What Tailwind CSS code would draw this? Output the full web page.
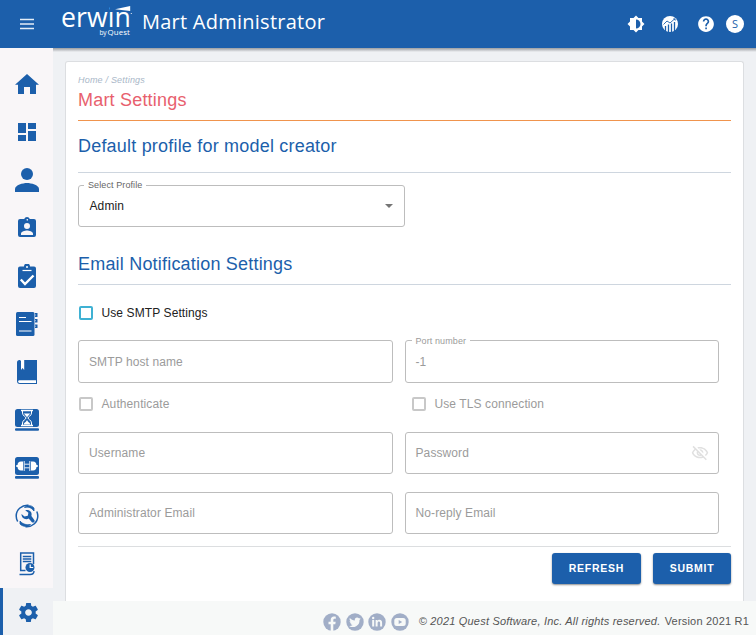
<!DOCTYPE html>
<html lang="en">
<head>
<meta charset="utf-8">
<title>Mart Administrator</title>
<script src="https://cdn.jsdelivr.net/npm/@tailwindcss/browser@4"></script>
</head>
<body class="w-[756px] h-[635px] overflow-hidden flex flex-col bg-[#eff1f4] font-['Liberation_Sans',Arial,sans-serif] text-xs tracking-[0.1px]">
<header class="relative z-10 h-12 shrink-0 flex items-center bg-[#1c5fab] text-white">
  <svg class="ml-[20px] w-[14px] h-[12px]" viewBox="0 0 14 12" fill="none" stroke="#e4edf7" stroke-width="1.7"><path d="M0 1.500h14M0 6h14M0 10.500h14"/></svg>
  <svg class="ml-[26px] w-[76px] h-12 overflow-visible" viewBox="60 0 76 48" fill="#fff">
    <text x="61" y="27" font-family="Open Sans, sans-serif" font-size="27" font-weight="400" textLength="70" lengthAdjust="spacingAndGlyphs">erwin</text>
    <path d="M110 5h22v6.200h-22z" fill="#1c5fab"/>
    <path d="M115 9.300L130.200 6v5z"/>
    <circle cx="131.300" cy="13.500" r=".6"/>
    <text x="99.500" y="34.500" font-family="Open Sans, sans-serif" font-size="6.500" textLength="7">by</text>
    <text x="107.500" y="34.500" font-family="Open Sans, sans-serif" font-size="7.500" textLength="22.500" lengthAdjust="spacingAndGlyphs">Quest</text>
  </svg>
  <h1 class="ml-[6px] -mt-[4px] font-['Open_Sans',sans-serif] text-[20px] leading-6 tracking-[0.25px] whitespace-nowrap">Mart Administrator</h1>
  <div class="ml-auto mr-[12px] flex items-center">
    <svg class="w-[18px] h-[18px] mr-[16px]" viewBox="0 0 24 24" fill="#fff"><path d="M20 15.310L23.310 12 20 8.690V4h-4.690L12 .690 8.690 4H4v4.690L.690 12 4 15.310V20h4.690L12 23.310 15.310 20H20v-4.690zM12 18V6c3.310 0 6 2.690 6 6s-2.690 6-6 6z"/></svg>
    <svg class="w-[18px] h-[18px] mr-[18px]" viewBox="0 0 18 18"><circle cx="9" cy="9" r="8" fill="#fff"/><path d="M2.500 9.500l3.500-3.500 3 2 4.500-4" stroke="#1c5fab" stroke-width=".9" fill="none"/><path d="M4.500 18v-7M7.500 18v-8.500M10.500 18V8.500M13.500 18V7" stroke="#1c5fab" stroke-width="1.300"/><path d="M12 3.500h2.500V6z" fill="#1c5fab"/></svg>
    <svg class="w-[18px] h-[18px] mr-[11px]" viewBox="0 0 24 24" fill="#fff"><path d="M12 1.500C6.200 1.500 1.500 6.200 1.500 12S6.200 22.500 12 22.500 22.500 17.800 22.500 12 17.800 1.500 12 1.500zm1.200 17.500h-2.200v-2.200h2.200V19zm2.200-8.100-1 1c-.8.800-1.200 1.500-1.200 3.100h-2.200v-.6c0-1.200.5-2.200 1.200-3l1.300-1.300c.4-.4.600-.9.600-1.500 0-1.200-.9-2.100-2.100-2.100s-2.100.9-2.100 2.100H7.700C7.700 6.300 9.600 4.400 12 4.400s4.300 1.900 4.300 4.200c0 .9-.4 1.700-.9 2.300z"/></svg>
    <span class="size-[18px] rounded-full bg-white text-[#1c5fab] text-[11px] leading-[18px] text-center font-['Open_Sans',sans-serif]">S</span>
  </div>
</header>
<div class="flex flex-1 min-h-0">
  <nav class="relative z-20 w-[53px] shrink-0 bg-[#f9f6f8] pt-3 flex flex-col text-[#1c5fab]">
    <a class="h-12 shrink-0 flex items-center justify-center"><svg class="w-6 h-5" viewBox="0 0 24 20" fill="currentColor"><path d="M3 20V10.800H0L12 0l12 10.800h-3V20h-6v-7H9v7z"/></svg></a>
    <a class="h-12 shrink-0 flex items-center justify-center"><svg class="size-[18px]" viewBox="0 0 18 18" fill="currentColor"><path d="M0 0h8v10H0zM10 0h8v6h-8zM0 12h8v6H0zM10 8h8v10h-8z"/></svg></a>
    <a class="h-12 shrink-0 flex items-center justify-center"><svg class="size-6" viewBox="0 0 24 24" fill="currentColor"><circle cx="12" cy="6" r="6"/><path d="M0 24v-3c0-4 8-6 12-6s12 2 12 6v3z"/></svg></a>
    <a class="h-12 shrink-0 flex items-center justify-center -mt-px mb-px"><svg class="w-[18px] h-5" viewBox="0 0 18 20" fill="currentColor"><path fill-rule="evenodd" d="M16 2h-4.200a3 3 0 0 0-5.600 0H2a2 2 0 0 0-2 2v14a2 2 0 0 0 2 2h14a2 2 0 0 0 2-2V4a2 2 0 0 0-2-2zM9 2a.8.8 0 1 1 0 1.500A.8.800 0 0 1 9 2zm0 4a3 3 0 1 1 0 6 3 3 0 0 1 0-6zm6 12H3v-1.400c0-2 4-3.100 6-3.100s6 1.100 6 3.100z"/></svg></a>
    <a class="h-12 shrink-0 flex items-center justify-center"><svg class="w-[18px] h-6" viewBox="0 0 18 24"><path fill="currentColor" d="M2 2.500h4a3 3 0 0 1 6 0h4a2 2 0 0 1 2 2V22a2 2 0 0 1-2 2H2a2 2 0 0 1-2-2V4.500a2 2 0 0 1 2-2z"/><circle cx="9" cy="3" r="1" fill="#fff"/><path d="M4.500 6.500h9" stroke="#fff" stroke-width="1.200"/><path d="M2.800 15.500L7 20l8.500-8.500" stroke="#fff" stroke-width="2.400" fill="none"/></svg></a>
    <a class="h-12 shrink-0 flex items-center justify-center"><svg class="w-[22px] h-6" viewBox="0 0 22 24"><rect width="18.500" height="24" rx="1.500" fill="currentColor"/><path d="M3 5.500h7M3 9.500h12.500M3 19h12.500" stroke="#fff"/><path d="M19 1h2.500v4H19zM19 7h2.500v3.500H19zM19 12.500h2.500V16H19z" fill="currentColor"/><path d="M18.500 3h1.500M18.500 8.700H20M18.500 14.200H20" stroke="#9fbbdd"/></svg></a>
    <a class="h-12 shrink-0 flex items-center justify-center"><svg class="w-5 h-6" viewBox="0 0 20 24"><path d="M2.500 0H20v24H3a3 3 0 0 1-3-3V2.500A2.500 2.500 0 0 1 2.500 0z" fill="currentColor"/><path d="M3 0h4.200v10L5.500 8 4 10V1" fill="#fff"/><path d="M2.500 20.200H19v2.700H2.500a1.350 1.350 0 0 1 0-2.700z" fill="#fff"/></svg></a>
    <a class="h-12 shrink-0 flex items-center justify-center"><svg class="w-6 h-[22px]" viewBox="0 0 24 22"><rect width="24" height="18" rx="2.500" fill="currentColor"/><rect y="19.200" width="24" height="2.500" rx="1" fill="currentColor"/><path d="M6 1.500h12M6 16.500h12" stroke="#fff" stroke-width="1.500"/><path d="M7.500 2v2c0 3 3.500 3.500 3.500 5s-3.500 2-3.500 5v2M16.500 2v2c0 3-3.500 3.500-3.500 5s3.500 2 3.500 5v2" stroke="#fff" stroke-width="1" fill="none"/><path d="M8.800 4.500h6.400L12 8.300zM8.800 15.500c0-2 2.200-2 3.200-4.500 1 2.500 3.200 2.500 3.200 4.500z" fill="#fff"/></svg></a>
    <a class="h-12 shrink-0 flex items-center justify-center"><svg class="w-6 h-[22px]" viewBox="0 0 24 22"><rect width="24" height="18" rx="2.500" fill="currentColor"/><rect y="19" width="24" height="2.700" rx="1" fill="currentColor"/><path d="M8 4.500v9H6C3.700 13.500 2.700 12 2.500 10H1.300V8h1.200C2.700 6 3.700 4.500 6 4.500zM16 4.500v9h2c2.300 0 3.300-1.500 3.500-3.500h1.200V8h-1.200c-.2-2-1.200-3.500-3.500-3.500z" fill="#fff"/><path d="M9.200 4v10M14.800 4v10M9.500 7.200h5M9.500 10.800h5" stroke="#fff" stroke-width=".9"/></svg></a>
    <a class="h-12 shrink-0 flex items-center justify-center"><svg class="size-6" viewBox="0 0 24 24" fill="none" stroke="currentColor"><path d="M13.500 1.300C7 .700 1.200 5.500 1.200 12c0 2.200.6 4 1.500 5.500M10.500 22.700C17 23.300 22.800 18.500 22.800 12c0-2.200-.6-3.500-1-4.500" stroke-width="1.500"/><path d="M5 17c3 3.500 6.500 4 10.500 3.500-3.500 3-8 2-10.500-.5zM19 7c-3-3.500-5-4.500-9.500-3.500 3.500-3 7.500-2 9.500.5z" fill="currentColor" stroke-width=".8"/><path fill="currentColor" stroke="none" d="M10.200 6.200c3.800-1.200 7.500 1.600 6.200 5.800l3.100 4.200c.8 1.500-1.400 3.200-2.600 2l-3.200-3.600c-3.600 1.700-7.400-.7-7.200-4.600l3 2.600 3.300-.8.600-3z"/></svg></a>
    <a class="h-12 shrink-0 flex items-center justify-center"><svg class="w-4 h-6" viewBox="0 0 16 24" fill="none" stroke="currentColor"><path d="M6.500 18.500H1.700V1h12.800v11" stroke-width="1.500"/><path d="M3.800 4.500h8.500M3.800 7h8.500M3.800 9.500h8.500" stroke-width="1.300"/><circle cx="11" cy="15.500" r="4.500" fill="currentColor" stroke="none"/><path d="M11.200 12.500v3h3" stroke="#fff" stroke-width="1.200"/><path d="M.5 22.500H11c2.500 0 4-1 4-3.500" stroke-width="1.400"/></svg></a>
    <a class="h-12 shrink-0 flex items-center justify-center bg-[#eff1f4] border-l-[3px] border-[#1c5fab]"><svg class="size-[23px]" viewBox="0 0 24 24" fill="currentColor"><path d="M19.430 12.980c.040-.320.070-.640.070-.980s-.030-.660-.070-.980l2.110-1.650c.190-.150.240-.420.120-.640l-2-3.460c-.120-.220-.390-.300-.610-.220l-2.490 1c-.520-.400-1.080-.730-1.690-.980l-.380-2.650C14.460 2.180 14.250 2 14 2h-4c-.250 0-.460.180-.490.420l-.380 2.650c-.610.250-1.170.590-1.690.980l-2.490-1c-.230-.090-.490 0-.610.220l-2 3.460c-.130.220-.070.490.120.640l2.110 1.650c-.040.320-.070.650-.070.980s.030.660.070.980l-2.110 1.650c-.190.150-.240.420-.120.640l2 3.460c.120.220.390.300.610.220l2.490-1c.520.400 1.080.730 1.690.980l.380 2.650c.030.240.240.420.490.420h4c.250 0 .460-.180.490-.420l.380-2.650c.610-.250 1.170-.590 1.690-.980l2.490 1c.230.090.490 0 .610-.220l2-3.460c.120-.220.070-.490-.120-.640l-2.110-1.650zM12 15.500c-1.930 0-3.500-1.570-3.500-3.500s1.570-3.500 3.500-3.500 3.500 1.570 3.500 3.500-1.570 3.500-3.500 3.500z"/></svg></a>
  </nav>
  <div class="flex-1 flex flex-col min-w-0">
    <div class="h-1 shrink-0 bg-linear-to-b from-[#9a9da1] to-[#eff1f4]"></div>
    <main class="mt-[9px] ml-3 mr-3 h-[540px] shrink-0 bg-white border border-b-0 border-[#dcdee1] rounded-t-[3px] px-3 flex flex-col">
      <p class="mt-[12px] h-3 leading-3 text-[9px] italic tracking-[0.2px] text-[#a9b7c8]">Home / Settings</p>
      <h2 class="mt-[4px] h-[21px] leading-[21px] text-[18px] tracking-[0.2px] text-[#e85f6e]">Mart Settings</h2>
      <hr class="mt-[9px] border-0 h-px bg-[#f0944d]">
      <h3 class="mt-[15px] h-[21px] leading-[21px] text-[18px] tracking-[0.2px] text-[#1c5fab]">Default profile for model creator</h3>
      <hr class="mt-[15px] border-0 h-px bg-[#ced6df]">
      <div class="relative mt-[12px] w-[327px] h-[42px] border border-[#bdbdbd] rounded-[3px] flex items-center justify-between pl-[10.5px] pr-[11px] text-[#212121]">
        <span class="absolute -top-[6px] left-[5px] px-1 bg-white text-[9px] leading-[11px] text-[#666]">Select Profile</span>
        <span>Admin</span>
        <svg class="w-2 h-1" viewBox="0 0 8 4"><path d="M0 0h8L4 4z" fill="#757575"/></svg>
      </div>
      <h3 class="mt-[27px] h-[21px] leading-[21px] text-[18px] tracking-[0.2px] text-[#1c5fab]">Email Notification Settings</h3>
      <hr class="mt-[9px] border-0 h-px bg-[#ced6df]">
      <label class="mt-[21px] ml-px h-[14px] flex items-center gap-[8.5px] text-[#212121]"><span class="size-[14px] border-2 border-[#3fb1d3] rounded-[2px]"></span>Use SMTP Settings</label>
      <div class="mt-[20px] grid grid-cols-[315px_314px] gap-x-3 text-[#9b9b9b]">
        <div class="h-[43px] border border-[#bdbdbd] rounded-[3px] flex items-center pl-[10px]">SMTP host name</div>
        <div class="relative h-[43px] border border-[#bdbdbd] rounded-[3px] flex items-center pl-[9.5px]"><span class="absolute -top-[5px] left-[5.5px] px-1 bg-white text-[9px] leading-[11px] whitespace-nowrap">Port number</span>-1</div>
        <label class="mt-[14px] ml-px h-[14px] flex items-center gap-[8.5px]"><span class="size-[14px] border-2 border-[#c8c8c8] rounded-[2px]"></span>Authenticate</label>
        <label class="mt-[14px] ml-[7px] h-[14px] flex items-center gap-[8.5px]"><span class="size-[14px] border-2 border-[#c8c8c8] rounded-[2px]"></span>Use TLS connection</label>
        <div class="mt-[21px] h-[42px] border border-[#bdbdbd] rounded-[3px] flex items-center pl-[10px]">Username</div>
        <div class="mt-[21px] h-[42px] border border-[#bdbdbd] rounded-[3px] flex items-center justify-between pl-[9.5px] pr-[9px]">Password
          <svg class="w-[18px] h-[18px]" viewBox="0 0 24 24" fill="#e0e0e0"><path d="M12 6c3.790 0 7.170 2.130 8.820 5.500-.590 1.220-1.420 2.270-2.410 3.120l1.410 1.410c1.390-1.230 2.490-2.770 3.180-4.530C21.270 7.110 17 4 12 4c-1.270 0-2.490.200-3.640.570l1.650 1.650C10.660 6.090 11.320 6 12 6zm-1.070 1.140L13 9.210c.570.250 1.030.710 1.280 1.280l2.070 2.070c.080-.340.140-.700.140-1.070C16.500 9.010 14.480 7 12 7c-.370 0-.720.050-1.070.140zM2.010 3.870l2.680 2.680C3.060 7.830 1.770 9.530 1 11.500 2.730 15.890 7 19 12 19c1.520 0 2.980-.290 4.320-.820l3.420 3.420 1.410-1.410L3.420 2.450 2.010 3.870zm7.500 7.500l2.610 2.610c-.040.010-.080.020-.120.020-1.380 0-2.500-1.120-2.500-2.500 0-.050.010-.080.010-.130zm-3.400-3.400l1.750 1.750c-.230.550-.360 1.150-.360 1.780 0 2.480 2.020 4.500 4.500 4.500.630 0 1.230-.130 1.770-.360l.980.980c-.880.240-1.800.380-2.750.380-3.790 0-7.170-2.130-8.820-5.500.700-1.430 1.720-2.610 2.930-3.530z"/></svg></div>
        <div class="mt-[18px] h-[42px] border border-[#bdbdbd] rounded-[3px] flex items-center pl-[10px]">Administrator Email</div>
        <div class="mt-[18px] h-[42px] border border-[#bdbdbd] rounded-[3px] flex items-center pl-[9.5px]">No-reply Email</div>
      </div>
      <hr class="mt-[12px] border-0 h-px bg-[#dcdee0]">
      <div class="mt-[6px] flex justify-end gap-3 text-white text-[10.5px] font-bold tracking-[0.75px]">
        <button class="w-[89px] h-[31px] pb-[2px] rounded-[3px] bg-[#1c5fab] shadow-[0_1px_2px_rgba(0,0,0,0.45)]">REFRESH</button>
        <button class="w-[78px] h-[31px] pb-[2px] rounded-[3px] bg-[#1c5fab] shadow-[0_1px_2px_rgba(0,0,0,0.45)]">SUBMIT</button>
      </div>
    </main>
    <footer class="flex-1 bg-[#f7f9f8] flex items-center justify-end pr-[6px] pt-[7px] text-[11px] tracking-[0.2px] text-[#555] whitespace-nowrap">
      <div class="flex gap-[4.500px] mr-[10px]">
        <svg class="size-[18px]" viewBox="0 0 18 18"><circle cx="9" cy="9" r="8.700" fill="#a1aec7"/><path d="M7.700 18v-6.800H5.500V8.700h2.200V7c0-2.300 1.300-3.500 3.300-3.500.9 0 1.800.2 1.800.2v2.100h-1.100c-1 0-1.400.6-1.400 1.300v1.600h2.400l-.4 2.500h-2V18z" fill="#f7f9f8"/></svg>
        <svg class="size-[18px]" viewBox="0 0 18 18"><circle cx="9" cy="9" r="8.700" fill="#a1aec7"/><path d="M14.700 5.600c-.4.200-.9.300-1.300.4.500-.3.800-.7 1-1.300-.5.300-1 .5-1.500.6a2.400 2.400 0 0 0-4.100 2.200c-2-.1-3.700-1-4.900-2.500-.6 1.100-.3 2.500.8 3.200-.4 0-.8-.1-1.100-.3 0 1.200.8 2.100 1.900 2.400-.3.100-.7.100-1.100 0 .3.900 1.200 1.600 2.200 1.600a4.700 4.700 0 0 1-3.500 1 6.700 6.700 0 0 0 10.400-6c.5-.3.900-.8 1.200-1.300z" fill="#f7f9f8"/></svg>
        <svg class="size-[18px]" viewBox="0 0 18 18"><circle cx="9" cy="9" r="8.700" fill="#a1aec7"/><circle cx="5.200" cy="5" r="1.200" fill="#f7f9f8"/><path d="M4.200 7h2v6.500h-2zM7.600 7h1.900v.9c.4-.6 1.100-1.100 2-1.100 2 0 2.600 1.300 2.600 3.100v3.600h-2v-3.300c0-.8-.2-1.600-1.100-1.600-1 0-1.400.7-1.400 1.600v3.300h-2z" fill="#f7f9f8"/></svg>
        <svg class="size-[18px]" viewBox="0 0 18 18"><circle cx="9" cy="9" r="8.700" fill="#a1aec7"/><rect x="3.300" y="4.900" width="11.400" height="8.200" rx="2.500" fill="#f7f9f8"/><path d="M7.700 7l3.500 2-3.500 2z" fill="#a1aec7"/></svg>
      </div>
      <p class="mr-px"><i>© 2021 Quest Software, Inc. All rights reserved.</i> <span class="ml-px">Version 2021 R1</span></p>
    </footer>
  </div>
</div>
</body>
</html>
